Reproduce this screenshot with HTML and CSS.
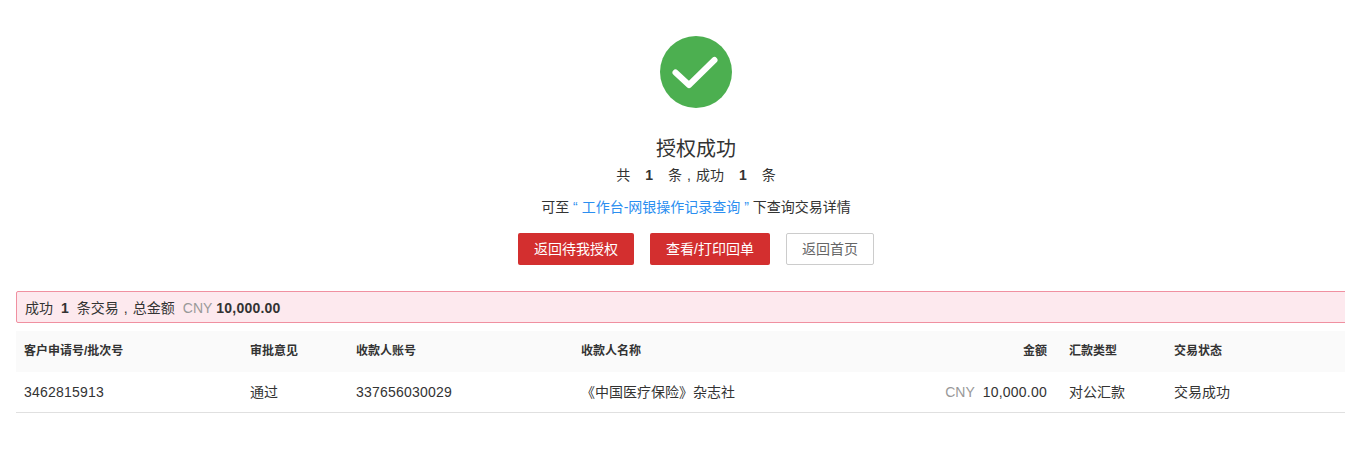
FILE: index.html
```html
<!DOCTYPE html>
<html lang="zh-CN">
<head>
<meta charset="utf-8">
<title>授权成功</title>
<link rel="stylesheet" href="styles.css">
</head>
<body>
<main class="page">
  <section class="result">
    <svg class="result-icon" width="72" height="72" viewBox="0 0 72 72" aria-hidden="true">
      <circle cx="36" cy="36" r="36" fill="#4caf50"/>
      <path d="M15.500 36.500 L29 49 L54.500 24" fill="none" stroke="#fff" stroke-width="6" stroke-linecap="round" stroke-linejoin="round"/>
    </svg>
    <h1 class="result-title">授权成功</h1>
    <p class="result-count">共<b class="count-num">1</b>条<span class="comma">,</span>成功<b class="count-num">1</b>条</p>
    <p class="result-hint">可至 <span class="hint-link">“ 工作台-网银操作记录查询 ”</span> 下查询交易详情</p>
    <div class="actions">
      <button class="btn btn-primary btn-wide">返回待我授权</button>
      <button class="btn btn-primary btn-wider">查看/打印回单</button>
      <button class="btn btn-default">返回首页</button>
    </div>
  </section>
  <div class="summary"><span>成功</span><b class="summary-num">1</b><span>条交易<span class="comma">,</span>总金额</span><span class="currency summary-cur">CNY</span><b class="digits">10,000.00</b></div>
  <table class="records">
    <colgroup>
      <col class="c1"><col class="c2"><col class="c3"><col class="c4"><col class="c5"><col class="c6"><col class="c7">
    </colgroup>
    <thead>
      <tr>
        <th>客户申请号/批次号</th><th>审批意见</th><th>收款人账号</th><th>收款人名称</th><th class="num">金额</th><th>汇款类型</th><th>交易状态</th>
      </tr>
    </thead>
    <tbody>
      <tr>
        <td class="digits">3462815913</td><td>通过</td><td class="digits">337656030029</td><td>《中国医疗保险》杂志社</td><td class="num"><span class="currency">CNY</span><span class="digits">10,000.00</span></td><td>对公汇款</td><td>交易成功</td>
      </tr>
    </tbody>
  </table>
</main>
</body>
</html>
```
FILE: styles.css
```css
html, body {
  margin: 0;
  overflow: hidden;
  background: #fff;
}
body {
  font-family: "Liberation Sans", "Noto Sans CJK SC", sans-serif;
  font-size: 14px;
  color: #333;
}
.page {
  width: 1345px;
  padding: 36px 0 0 16px;
  box-sizing: border-box;
}
.result {
  display: flex;
  flex-direction: column;
  align-items: center;
  width: 1360px;
}
.result-icon { display: block; }
.result-title {
  margin: 27px 0 0;
  font-size: 20px;
  line-height: 28px;
  font-weight: 400;
}
.result-count {
  margin: 2px 0 0;
  line-height: 20px;
}
.count-num { margin: 0 15px; }
.comma {
  display: inline-block;
  width: 14px;
  text-align: center;
}
.digits { letter-spacing: 0.22px; }
.result-hint {
  margin: 12px 0 0;
  line-height: 20px;
}
.hint-link { color: #2b8ef0; }
.actions {
  display: flex;
  gap: 16px;
  margin-top: 16px;
}
.btn {
  height: 32px;
  padding: 0 0 2px;
  border-radius: 2px;
  font: inherit;
  box-sizing: border-box;
}
.btn-primary {
  border: 0;
  background: #d32f2f;
  color: #fff;
}
.btn-wide { width: 116px; }
.btn-wider { width: 120px; }
.btn-default {
  width: 88px;
  border: 1px solid #ccc;
  background: #fff;
  color: #666;
}
.summary {
  display: flex;
  align-items: center;
  width: 1360px;
  height: 32px;
  margin-top: 26px;
  padding: 1px 8px 0;
  box-sizing: border-box;
  border: 1px solid #f090a0;
  border-radius: 2px;
  background: #fde9ee;
  line-height: 20px;
}
.summary-num { margin: 0 8px; }
.summary-cur { margin: 0 4px 0 8px; }
.currency { color: #999; }
.records {
  width: 1360px;
  margin-top: 8px;
  border-collapse: collapse;
  table-layout: fixed;
}
.c1 { width: 226px; }
.c2 { width: 106px; }
.c3 { width: 225px; }
.c4 { width: 260px; }
.c5 { width: 228px; }
.c6 { width: 105px; }
.records th, .records td {
  padding: 0 8px;
  text-align: left;
  line-height: 20px;
}
.records th {
  height: 41px;
  padding-bottom: 1px;
  box-sizing: border-box;
  background: #fafafa;
  font-size: 12px;
  font-weight: 700;
}
.records td {
  height: 40px;
  box-sizing: border-box;
  border-bottom: 1px solid #e0e0e0;
}
.records .num { text-align: right; padding-right: 14px; }
.records td .currency { margin-right: 8px; }
```
